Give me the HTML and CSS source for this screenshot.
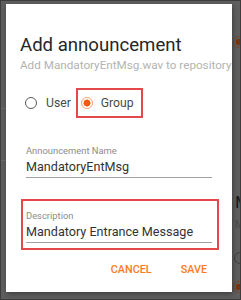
FILE: index.html
```html
<!DOCTYPE html>
<html lang="en">
<head>
<meta charset="utf-8">
<title>Add announcement</title>
<link rel="stylesheet" href="styles.css">
</head>
<body>
<div class="page">
  <div class="underlay" aria-hidden="true">
    <span class="ul-line ul-line--a"></span>
    <span class="ul-line ul-line--b"></span>
    <span class="ul-radio ul-radio--on ul-radio--top"></span>
    <span class="ul-title">M</span>
    <span class="ul-sub">M</span>
    <span class="ul-radio ul-radio--off"></span>
    <span class="ul-radio ul-radio--on ul-radio--bottom"></span>
  </div>
  <div class="dialog">
    <h1 class="title">Add announcement</h1>
    <p class="subtitle">Add MandatoryEntMsg.wav to repository</p>
    <div class="radios">
      <label class="radio"><span class="radio-circle"></span>User</label>
      <label class="radio radio--checked highlight"><span class="radio-circle"></span>Group</label>
    </div>
    <div class="field field--first">
      <div class="field-label">Announcement Name</div>
      <div class="field-value">MandatoryEntMsg</div>
    </div>
    <div class="highlight highlight--field">
      <div class="field">
        <div class="field-label">Description</div>
        <div class="field-value">Mandatory Entrance Message</div>
      </div>
    </div>
    <div class="actions">
      <button class="btn">CANCEL</button>
      <button class="btn">SAVE</button>
    </div>
  </div>
</div>
</body>
</html>
```
FILE: styles.css
```css
* { box-sizing: border-box; }
html, body { margin: 0; padding: 0; }
body {
  font-family: Roboto, "Noto Sans", sans-serif;
  background: #5d5d5d;
}
.page {
  position: relative;
  width: 241px;
  height: 300px;
  background: #5e5e5e;
  border: 1px solid #3c3c3c;
  padding: 3px 0 0 5px;
  overflow: hidden;
}
.underlay {
  position: absolute;
  inset: 0;
}
.ul-line {
  position: absolute;
  left: 0;
  width: 6px;
  height: 1px;
  background: #6a6a6a;
}
.ul-line--a { top: 107px; }
.ul-line--b { top: 159px; }
.ul-radio {
  position: absolute;
  width: 12px;
  height: 12px;
  border-radius: 50%;
}
.ul-radio--on {
  border: 1.5px solid #7a4a2c;
  background: radial-gradient(circle, #803408 0 3px, #5e5e5e 3.5px);
}
.ul-radio--top { left: 232px; top: 35px; }
.ul-radio--bottom { left: 232px; top: 280px; }
.ul-radio--off {
  left: 233px;
  top: 251px;
  border: 1.5px solid #404040;
}
.ul-title {
  position: absolute;
  left: 234px;
  top: 191px;
  font-size: 17px;
  color: #1a1a1a;
}
.ul-sub {
  position: absolute;
  left: 234px;
  top: 217px;
  font-size: 11px;
  color: #4a4a4a;
}
.dialog {
  position: relative;
  width: 226px;
  height: 288px;
  background: #fff;
  box-shadow: 1px 2px 5px rgba(0, 0, 0, 0.35);
  padding: 30px 14px 0 14px;
  display: flex;
  flex-direction: column;
}
.title {
  margin: 0;
  font-size: 18.6px;
  line-height: 22px;
  font-weight: 400;
  color: #262626;
}
.subtitle {
  margin: 2px 0 0;
  font-size: 11.7px;
  line-height: 14px;
  color: #b3b3b3;
  white-space: nowrap;
}
.radios {
  margin: 16px 0 0 5px;
  height: 30px;
  display: flex;
  align-items: center;
}
.radio {
  display: flex;
  align-items: center;
  gap: 9px;
  font-size: 12.2px;
  color: #4a4a4a;
}
.radio-circle {
  width: 12px;
  height: 12px;
  border-radius: 50%;
  border: 1.5px solid #5a5a5a;
  flex: none;
}
.radio--checked { gap: 8px; margin-left: 5px; }
.radio--checked .radio-circle {
  border-color: #ffa070;
  background: radial-gradient(circle, #ff5a0a 0 3.2px, #fff 3.8px);
}
.highlight {
  border: 2px solid #e5484b;
}
.radios .highlight {
  height: 30px;
  padding: 0 7px 0 3px;
}
.field {
  width: 186px;
}
.field--first {
  margin: 27px 0 0 6px;
}
.highlight--field {
  margin: 21px 0 0 1px;
  width: 198px;
  padding: 9px 5px 5px 3px;
}
.field-label {
  font-size: 9.4px;
  line-height: 12px;
  color: #8c8c8c;
}
.field-value {
  margin-top: 2px;
  font-size: 12.6px;
  line-height: 16px;
  padding-bottom: 2px;
  color: #333;
  border-bottom: 1px solid #a0a0a0;
  white-space: nowrap;
}
.actions {
  margin: 13px 11px 0 0;
  display: flex;
  justify-content: flex-end;
  gap: 29px;
}
.btn {
  border: 0;
  background: none;
  padding: 0;
  font-family: Roboto, "Noto Sans", sans-serif;
  font-size: 10.8px;
  line-height: 14px;
  font-weight: 500;
  color: #ff7a22;
}
```
